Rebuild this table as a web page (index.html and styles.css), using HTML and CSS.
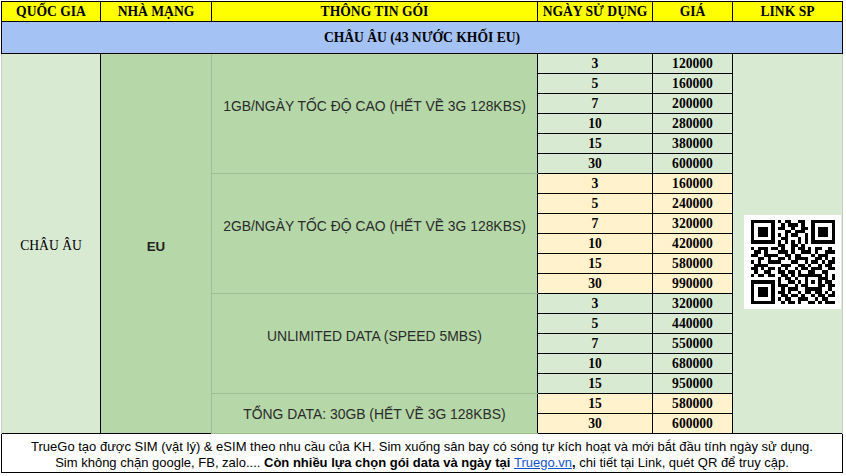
FILE: index.html
```html
<!DOCTYPE html>
<html lang="vi">
<head>
<meta charset="utf-8">
<title>Châu Âu eSIM</title>
<link rel="stylesheet" href="styles.css">
</head>
<body>
<table class="sheet">
  <colgroup>
    <col class="c1"><col class="c2"><col class="c3"><col class="c4"><col class="c5"><col class="c6">
  </colgroup>
  <tr class="hdr">
    <th>QUỐC GIA</th><th>NHÀ MẠNG</th><th>THÔNG TIN GÓI</th><th>NGÀY SỬ DỤNG</th><th>GIÁ</th><th>LINK SP</th>
  </tr>
  <tr class="sec">
    <th colspan="6">CHÂU ÂU (43 NƯỚC KHỐI EU)</th>
  </tr>
  <tr class="row">
    <td class="country" rowspan="19">CHÂU ÂU</td>
    <td class="net" rowspan="19">EU</td>
    <td class="pkg lift" rowspan="6">1GB/NGÀY TỐC ĐỘ CAO (HẾT VỀ 3G 128KBS)</td>
    <td class="num g">3</td><td class="num g">120000</td>
    <td class="link" rowspan="19">
      <div class="qr">
        <svg viewBox="0 0 25 25" width="84" height="84" shape-rendering="crispEdges" aria-label="QR">
          <path fill="#000" d="M0 0h7v1h-7zM8 0h1v1h-1zM10 0h2v1h-2zM14 0h2v1h-2zM18 0h7v1h-7z
M0 1h1v1h-1zM6 1h1v1h-1zM9 1h1v1h-1zM11 1h3v1h-3zM15 1h1v1h-1zM18 1h1v1h-1zM24 1h1v1h-1z
M0 2h1v1h-1zM2 2h3v1h-3zM6 2h1v1h-1zM8 2h2v1h-2zM12 2h1v1h-1zM15 2h2v1h-2zM18 2h1v1h-1zM20 2h3v1h-3zM24 2h1v1h-1z
M0 3h1v1h-1zM2 3h3v1h-3zM6 3h1v1h-1zM10 3h2v1h-2zM13 3h3v1h-3zM18 3h1v1h-1zM20 3h3v1h-3zM24 3h1v1h-1z
M0 4h1v1h-1zM2 4h3v1h-3zM6 4h1v1h-1zM8 4h1v1h-1zM10 4h1v1h-1zM12 4h2v1h-2zM16 4h1v1h-1zM18 4h1v1h-1zM20 4h3v1h-3zM24 4h1v1h-1z
M0 5h1v1h-1zM6 5h1v1h-1zM9 5h2v1h-2zM14 5h1v1h-1zM16 5h1v1h-1zM18 5h1v1h-1zM24 5h1v1h-1z
M0 6h7v1h-7zM8 6h1v1h-1zM10 6h1v1h-1zM12 6h1v1h-1zM14 6h1v1h-1zM16 6h1v1h-1zM18 6h7v1h-7z
M8 7h2v1h-2zM12 7h2v1h-2zM15 7h1v1h-1z
M0 8h1v1h-1zM2 8h3v1h-3zM6 8h2v1h-2zM9 8h1v1h-1zM12 8h1v1h-1zM14 8h2v1h-2zM17 8h1v1h-1zM19 8h2v1h-2zM23 8h1v1h-1z
M1 9h2v1h-2zM4 9h1v1h-1zM8 9h3v1h-3zM12 9h1v1h-1zM15 9h3v1h-3zM19 9h1v1h-1zM22 9h3v1h-3z
M0 10h2v1h-2zM4 10h4v1h-4zM10 10h2v1h-2zM13 10h2v1h-2zM18 10h1v1h-1zM20 10h3v1h-3z
M2 11h2v1h-2zM5 11h1v1h-1zM8 11h2v1h-2zM11 11h1v1h-1zM13 11h4v1h-4zM19 11h2v1h-2zM22 11h1v1h-1zM24 11h1v1h-1z
M0 12h1v1h-1zM2 12h1v1h-1zM5 12h4v1h-4zM12 12h2v1h-2zM16 12h1v1h-1zM18 12h2v1h-2zM21 12h1v1h-1zM23 12h2v1h-2z
M1 13h4v1h-4zM9 13h3v1h-3zM14 13h2v1h-2zM17 13h1v1h-1zM20 13h1v1h-1zM22 13h2v1h-2z
M0 14h2v1h-2zM3 14h1v1h-1zM5 14h2v1h-2zM8 14h1v1h-1zM10 14h1v1h-1zM13 14h1v1h-1zM15 14h2v1h-2zM18 14h3v1h-3zM23 14h2v1h-2z
M1 15h1v1h-1zM4 15h2v1h-2zM8 15h2v1h-2zM11 15h2v1h-2zM14 15h1v1h-1zM17 15h2v1h-2zM21 15h2v1h-2z
M0 16h1v1h-1zM2 16h2v1h-2zM5 16h2v1h-2zM9 16h2v1h-2zM12 16h1v1h-1zM14 16h7v1h-7zM22 16h1v1h-1zM24 16h1v1h-1z
M8 17h1v1h-1zM10 17h2v1h-2zM13 17h1v1h-1zM16 17h1v1h-1zM20 17h3v1h-3zM24 17h1v1h-1z
M0 18h7v1h-7zM8 18h1v1h-1zM11 18h2v1h-2zM14 18h1v1h-1zM16 18h1v1h-1zM18 18h1v1h-1zM20 18h1v1h-1zM22 18h2v1h-2z
M0 19h1v1h-1zM6 19h1v1h-1zM8 19h3v1h-3zM13 19h1v1h-1zM15 19h2v1h-2zM20 19h2v1h-2zM23 19h2v1h-2z
M0 20h1v1h-1zM2 20h3v1h-3zM6 20h1v1h-1zM9 20h1v1h-1zM11 20h3v1h-3zM16 20h5v1h-5zM23 20h1v1h-1z
M0 21h1v1h-1zM2 21h3v1h-3zM6 21h1v1h-1zM8 21h2v1h-2zM11 21h1v1h-1zM14 21h1v1h-1zM16 21h2v1h-2zM19 21h2v1h-2zM22 21h1v1h-1zM24 21h1v1h-1z
M0 22h1v1h-1zM2 22h3v1h-3zM6 22h1v1h-1zM9 22h2v1h-2zM12 22h2v1h-2zM15 22h1v1h-1zM18 22h1v1h-1zM20 22h2v1h-2zM23 22h2v1h-2z
M0 23h1v1h-1zM6 23h1v1h-1zM8 23h1v1h-1zM10 23h2v1h-2zM14 23h3v1h-3zM19 23h1v1h-1zM21 23h2v1h-2z
M0 24h7v1h-7zM9 24h1v1h-1zM11 24h2v1h-2zM14 24h1v1h-1zM17 24h2v1h-2zM20 24h1v1h-1zM22 24h3v1h-3z"/>
        </svg>
      </div>
    </td>
  </tr>
  <tr class="row"><td class="num g">5</td><td class="num g">160000</td></tr>
  <tr class="row"><td class="num g">7</td><td class="num g">200000</td></tr>
  <tr class="row"><td class="num g">10</td><td class="num g">280000</td></tr>
  <tr class="row"><td class="num g">15</td><td class="num g">380000</td></tr>
  <tr class="row"><td class="num g">30</td><td class="num g">600000</td></tr>
  <tr class="row">
    <td class="pkg lift" rowspan="6">2GB/NGÀY TỐC ĐỘ CAO (HẾT VỀ 3G 128KBS)</td>
    <td class="num y">3</td><td class="num y">160000</td>
  </tr>
  <tr class="row"><td class="num y">5</td><td class="num y">240000</td></tr>
  <tr class="row"><td class="num y">7</td><td class="num y">320000</td></tr>
  <tr class="row"><td class="num y">10</td><td class="num y">420000</td></tr>
  <tr class="row"><td class="num y">15</td><td class="num y">580000</td></tr>
  <tr class="row"><td class="num y">30</td><td class="num y">990000</td></tr>
  <tr class="row">
    <td class="pkg lift" rowspan="5">UNLIMITED DATA (SPEED 5MBS)</td>
    <td class="num g">3</td><td class="num g">320000</td>
  </tr>
  <tr class="row"><td class="num g">5</td><td class="num g">440000</td></tr>
  <tr class="row"><td class="num g">7</td><td class="num g">550000</td></tr>
  <tr class="row"><td class="num g">10</td><td class="num g">680000</td></tr>
  <tr class="row"><td class="num g">15</td><td class="num g">950000</td></tr>
  <tr class="row">
    <td class="pkg" rowspan="2">TỔNG DATA: 30GB (HẾT VỀ 3G 128KBS)</td>
    <td class="num y">15</td><td class="num y">580000</td>
  </tr>
  <tr class="row"><td class="num y">30</td><td class="num y">600000</td></tr>
  <tr class="foot">
    <td colspan="6">TrueGo tạo được SIM (vật lý) &amp; eSIM theo nhu cầu của KH. Sim xuống sân bay có sóng tự kích hoạt và mới bắt đầu tính ngày sử dụng.<br>Sim không chặn google, FB, zalo.... <b>Còn nhiều lựa chọn gói data và ngày tại </b><a class="site" href="#">Truego.vn</a><b>,</b> chi tiết tại Link, quét QR để truy cập.</td>
  </tr>
</table>
</body>
</html>
```

FILE: styles.css
```css
html, body {
  margin: 0;
  padding: 0;
  background: #ffffff;
}

.sheet {
  margin: 1px 0 0 1px;
  border-collapse: collapse;
  table-layout: fixed;
  width: 841px;
}

.c1 { width: 99px; }
.c2 { width: 111px; }
.c3 { width: 326px; }
.c4 { width: 115px; }
.c5 { width: 80px; }
.c6 { width: 110px; }

.sheet th,
.sheet td {
  padding: 0;
  text-align: center;
  vertical-align: middle;
  overflow: hidden;
  white-space: nowrap;
}

.hdr th {
  height: 19px;
  background: #ffff00;
  border: 1px solid #000;
  font-family: "Liberation Serif", "Times New Roman", serif;
  font-weight: bold;
  font-size: 13.6px;
  color: #000;
}

.sec th {
  height: 31px;
  background: #a4c2f4;
  border: 1px solid #000;
  font-family: "Liberation Serif", "Times New Roman", serif;
  font-weight: bold;
  font-size: 13.6px;
  color: #000;
}

.row td { height: 19px; }

.country {
  background: #d9ead3;
  border-left: 1px solid #c9c9c9;
  border-right: 1px solid #000;
  font-family: "Liberation Serif", "Times New Roman", serif;
  font-size: 13.6px;
  color: #000;
}

.net {
  background: #b6d7a8;
  border-right: 1px solid #9fbf93;
  font-family: "Liberation Sans", Arial, sans-serif;
  font-weight: bold;
  font-size: 13.33px;
  color: #222;
}

.sheet td.country,
.sheet td.net { padding-top: 5px; }

.pkg {
  background: #b6d7a8;
  border-top: 1px solid #9fbf93;
  border-bottom: 1px solid #9fbf93;
  font-family: "Liberation Sans", Arial, sans-serif;
  font-size: 13.9px;
  color: #2b2b2b;
}

.sheet td.lift { padding-bottom: 16px; }

.num {
  border: 1px solid #000;
  font-family: "Liberation Serif", "Times New Roman", serif;
  font-weight: bold;
  font-size: 13.6px;
  color: #000;
}

.g { background: #d9ead3; }
.y { background: #fff2cc; }

.link {
  background: #d9ead3;
  border-right: 1px solid #c9c9c9;
}

.qr {
  width: 97px;
  height: 94px;
  margin: 36px 0 0 11px;
  background: #fff;
  display: flex;
  align-items: center;
  justify-content: center;
}

.qr svg { display: block; }

.foot td {
  height: 37px;
  border: 1px solid #000;
  background: #fff;
  vertical-align: bottom;
  padding-bottom: 1px;
  font-family: "Liberation Sans", Arial, sans-serif;
  font-size: 13px;
  line-height: 16px;
  color: #000;
}

.site {
  color: #1155cc;
  text-decoration: underline;
}
```
